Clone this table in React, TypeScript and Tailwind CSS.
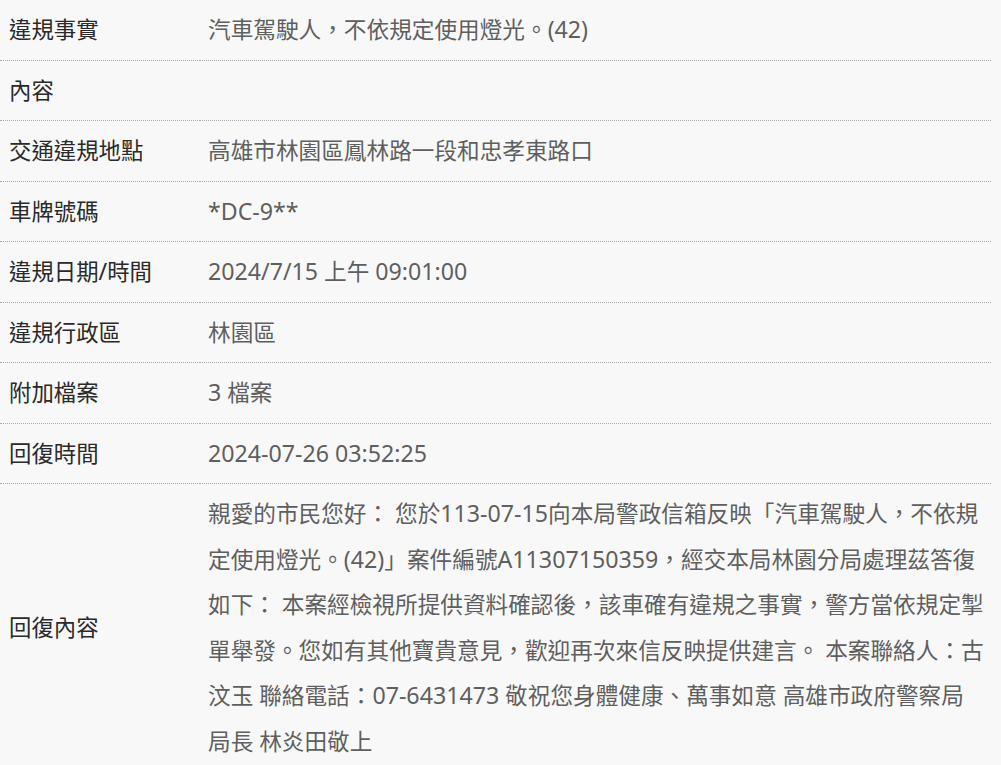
const ROWS: { label: string; value: string }[] = [
  { label: "違規事實", value: "汽車駕駛人，不依規定使用燈光。(42)" },
  { label: "內容", value: "" },
  { label: "交通違規地點", value: "高雄市林園區鳳林路一段和忠孝東路口" },
  { label: "車牌號碼", value: "*DC-9**" },
  { label: "違規日期/時間", value: "2024/7/15 上午 09:01:00" },
  { label: "違規行政區", value: "林園區" },
  { label: "附加檔案", value: "3 檔案" },
  { label: "回復時間", value: "2024-07-26 03:52:25" },
  {
    label: "回復內容",
    value:
      "親愛的市民您好： 您於113-07-15向本局警政信箱反映「汽車駕駛人，不依規定使用燈光。(42)」案件編號A11307150359，經交本局林園分局處理茲答復如下： 本案經檢視所提供資料確認後，該車確有違規之事實，警方當依規定掣單舉發。您如有其他寶貴意見，歡迎再次來信反映提供建言。 本案聯絡人：古汶玉 聯絡電話：07-6431473 敬祝您身體健康、萬事如意 高雄市政府警察局局長 林炎田敬上",
  },
];

// latin runs render a touch larger than the CJK text, like the original page's font
const Mixed = ({ text }: { text: string }) => (
  <>
    {text.split(/([\x21-\x7e]+)/).map((part, i) =>
      /^[\x21-\x7e]+$/.test(part) ? (
        <span key={i} className="text-[23.2px]">
          {part}
        </span>
      ) : (
        part
      )
    )}
  </>
);

const App = () => {
  return (
    <div
      className="min-h-[765px] bg-[#f8f8f8]"
      style={{ fontFamily: '"Noto Sans", "Noto Sans CJK TC", sans-serif' }}
    >
      <table className="w-[991px] border-collapse leading-[45.5px]">
        <tbody>
          {ROWS.map((row, i) => (
            <tr
              key={row.label}
              className={i < ROWS.length - 1 ? "border-b border-dotted border-[#a8a8a8]" : ""}
            >
              <td className="w-[200px] px-[9px] py-[7px] align-middle text-[22.4px] text-[#2a2a2a]">
                <Mixed text={row.label} />
              </td>
              <td className="pl-[8px] pr-[6px] py-[7px] align-middle text-[22.65px] text-[#5f5f5f]">
                {row.value ? <Mixed text={row.value} /> : "\u00a0"}
              </td>
            </tr>
          ))}
        </tbody>
      </table>
    </div>
  );
};

export default App;
